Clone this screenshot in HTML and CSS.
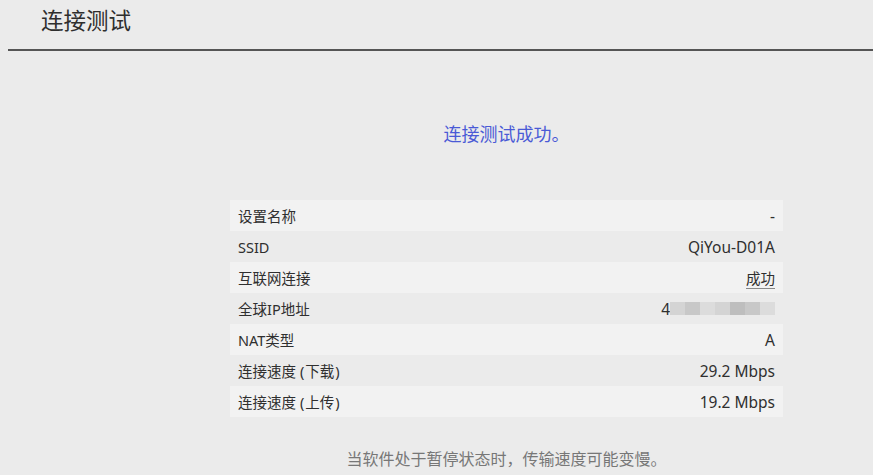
FILE: index.html
```html
<!DOCTYPE html>
<html lang="zh-CN">
<head>
    <meta charset="UTF-8">
    <title>连接测试</title>
    <link rel="stylesheet" href="styles.css">
</head>
<body>
    <div class="header">
        <h1>连接测试</h1>
    </div>
    <div class="content">
        <p class="result">连接测试成功。</p>
        <table class="info">
            <tr><td>设置名称</td><td>-</td></tr>
            <tr><td>SSID</td><td>QiYou-D01A</td></tr>
            <tr><td>互联网连接</td><td><span class="ok">成功</span></td></tr>
            <tr>
                <td>全球IP地址</td>
                <td>
                    <span class="ip">4<span class="mosaic">
                        <i class="m1"></i><i class="m2"></i><i class="m3"></i><i class="m1"></i><i class="m4"></i><i class="m2"></i><i class="m3"></i>
                    </span></span>
                </td>
            </tr>
            <tr><td>NAT类型</td><td>A</td></tr>
            <tr><td>连接速度<span class="lp">(</span>下载<span class="rp">)</span></td><td>29.2 Mbps</td></tr>
            <tr><td>连接速度<span class="lp">(</span>上传<span class="rp">)</span></td><td>19.2 Mbps</td></tr>
        </table>
        <p class="note">当软件处于暂停状态时，传输速度可能变慢。</p>
    </div>
</body>
</html>
```

FILE: styles.css
```css
body {
    margin: 0;
    background-color: #ebebeb;
    font-family: "Noto Sans", "Noto Sans CJK SC", sans-serif;
    color: #333;
    height: 475px;
    overflow: hidden;
}
.header {
    margin-left: 8px;
    height: 49px;
    border-bottom: 2px solid #555;
}
.header h1 {
    margin: 0;
    padding: 6px 0 0 33px;
    font-size: 22.5px;
    font-weight: normal;
    line-height: 30px;
    color: #2e2e2e;
}
.content {
    width: 553px;
    margin: 0 auto 0 230px;
}
.result {
    margin: 68px 0 0 0;
    text-align: center;
    font-size: 18px;
    line-height: 30px;
    color: #4a5ad6;
}
.info {
    width: 100%;
    margin-top: 51px;
    border-collapse: collapse;
    font-size: 14.5px;
    color: #2f2f2f;
}
.info td {
    height: 31px;
    padding: 0 8px;
    line-height: 20px;
}
.info td:last-child {
    text-align: right;
    font-size: 15.5px;
}
.info tr:nth-child(odd) {
    background-color: #f2f2f2;
}
.lp {
    padding: 0 1px 0 4px;
}
.rp {
    padding: 0 4px 0 1px;
}
.ok {
    font-size: 14.5px;
    border-bottom: 1px solid #888;
}
.ip {
    display: inline-flex;
    align-items: center;
}
.mosaic {
    display: inline-flex;
    height: 13px;
}
.mosaic i {
    display: block;
    width: 15px;
    height: 13px;
}
.m1 { background-color: #d4d4d4; }
.m2 { background-color: #c8c8c8; }
.m3 { background-color: #dcdcdc; }
.m4 { background-color: #bebebe; }
.note {
    margin: 31px 0 0 0;
    text-align: center;
    font-size: 16px;
    line-height: 22px;
    color: #777;
}
```
